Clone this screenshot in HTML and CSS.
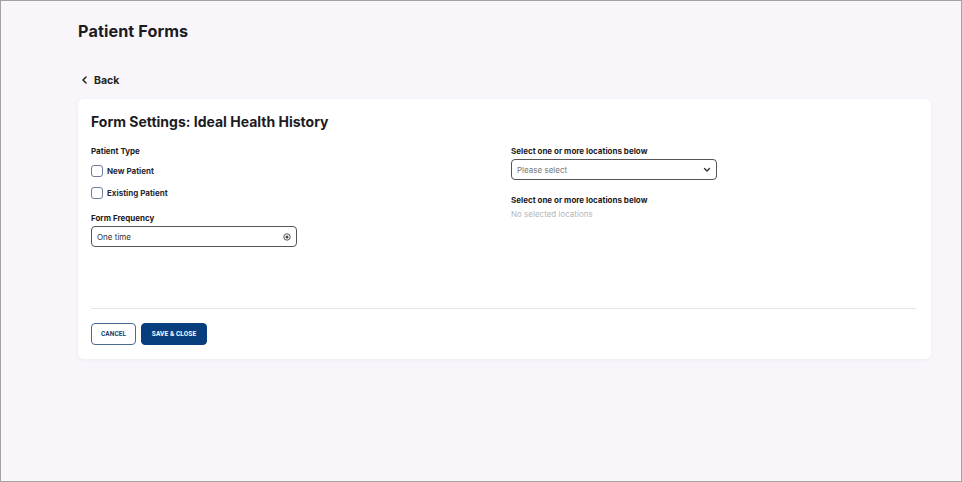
FILE: index.html
```html
<!DOCTYPE html>
<html lang="en">
<head>
<meta charset="utf-8">
<title>Patient Forms</title>
<link rel="stylesheet" href="styles.css">
</head>
<body>
<div class="frame">
  <main class="page">
    <h1 class="page-title">Patient Forms</h1>
    <a class="back" href="#">
      <svg class="back-icon" width="7" height="8" viewBox="0 0 7 8"><path d="M5 1 L2 4 L5 7" fill="none" stroke="#222" stroke-width="1.5" stroke-linecap="round" stroke-linejoin="round"/></svg>
      <span>Back</span>
    </a>
    <section class="card">
      <h2 class="card-title">Form Settings: Ideal Health History</h2>
      <div class="cols">
        <div class="col">
          <div class="label">Patient Type</div>
          <label class="check"><span class="box"></span><span>New Patient</span></label>
          <label class="check"><span class="box"></span><span>Existing Patient</span></label>
          <div class="label label-freq">Form Frequency</div>
          <div class="field">
            <span>One time</span>
            <svg width="8" height="8" viewBox="0 0 8 8"><circle cx="4" cy="4" r="3.2" fill="none" stroke="#444" stroke-width="0.9"/><circle cx="4" cy="4" r="1.5" fill="#444"/></svg>
          </div>
        </div>
        <div class="col">
          <div class="label">Select one or more locations below</div>
          <div class="field">
            <span class="placeholder">Please select</span>
            <svg width="8" height="6" viewBox="0 0 8 6"><path d="M1.5 1.5 L4 4 L6.5 1.5" fill="none" stroke="#333" stroke-width="1.4" stroke-linecap="round" stroke-linejoin="round"/></svg>
          </div>
          <div class="label label-sel">Select one or more locations below</div>
          <div class="empty">No selected locations</div>
        </div>
      </div>
      <div class="actions">
        <button class="btn btn-outline" type="button">Cancel</button>
        <button class="btn btn-primary" type="button">Save &amp; Close</button>
      </div>
    </section>
  </main>
</div>
</body>
</html>
```
FILE: styles.css
```css
* { box-sizing: border-box; }
html, body { margin: 0; height: 100%; }
body {
  font-family: Inter, "Noto Sans", "Liberation Sans", sans-serif;
  color: #1c1b22;
  background: #f8f6fb;
}
.frame {
  height: 482px;
  border: 1px solid #a3a3a3;
  background: #f8f6fb;
}
.page {
  padding: 0 30px 0 77px;
}
.page-title {
  margin: 0;
  padding-top: 20px;
  font-size: 16.2px;
  font-weight: 700;
  line-height: 20px;
  letter-spacing: 0.1px;
  color: #1c1b22;
}
.back {
  display: flex;
  align-items: center;
  gap: 6px;
  margin-top: 31px;
  padding-left: 3px;
  height: 16px;
  font-size: 10.5px;
  font-weight: 700;
  color: #222;
  text-decoration: none;
}
.back-icon { flex: none; }
.card {
  margin-top: 11px;
  background: #fff;
  border-radius: 6px;
  box-shadow: 0 1px 4px rgba(60, 40, 90, 0.06);
  padding: 14px 15px 14px 13px;
}
.card-title {
  margin: 0;
  font-size: 14px;
  line-height: 18px;
  font-weight: 700;
  color: #1c1b22;
}
.cols {
  display: grid;
  grid-template-columns: 420px 206px;
  margin-top: 15px;
  min-height: 162px;
}
.label {
  font-size: 8px;
  font-weight: 700;
  line-height: 10px;
  color: #1c1b22;
}
.check {
  display: flex;
  align-items: center;
  gap: 4px;
  margin-top: 9px;
  font-size: 8px;
  font-weight: 700;
  line-height: 10px;
  color: #2a2a33;
}
.check + .check { margin-top: 10px; }
.box {
  width: 12px;
  height: 12px;
  border: 1px solid #6d7d9a;
  border-radius: 3px;
  background: #fff;
}
.label-freq { margin-top: 14px; }
.field {
  margin-top: 3px;
  width: 206px;
  height: 21px;
  border: 1px solid #555;
  border-radius: 4px;
  display: flex;
  align-items: center;
  justify-content: space-between;
  padding: 0 5px 0 5px;
  font-size: 8px;
  color: #333;
}
.placeholder { color: #777; }
.label-sel { margin-top: 15px; }
.empty {
  margin-top: 4px;
  font-size: 8px;
  line-height: 10px;
  color: #b5b5b8;
}
.actions {
  border-top: 1px solid #e6e4ea;
  padding-top: 14px;
  display: flex;
  gap: 5px;
}
.btn {
  height: 22px;
  border-radius: 4px;
  font-family: "Roboto", "Liberation Sans", sans-serif;
  font-size: 6.5px;
  font-weight: 700;
  text-transform: uppercase;
  letter-spacing: 0.1px;
  padding: 0;
  cursor: pointer;
}
.btn-outline {
  width: 45px;
  background: #fff;
  color: #1d3f70;
  border: 1px solid #4b6b95;
}
.btn-primary {
  width: 66px;
  background: #083d7e;
  color: #fff;
  border: 1px solid #083d7e;
}
```
